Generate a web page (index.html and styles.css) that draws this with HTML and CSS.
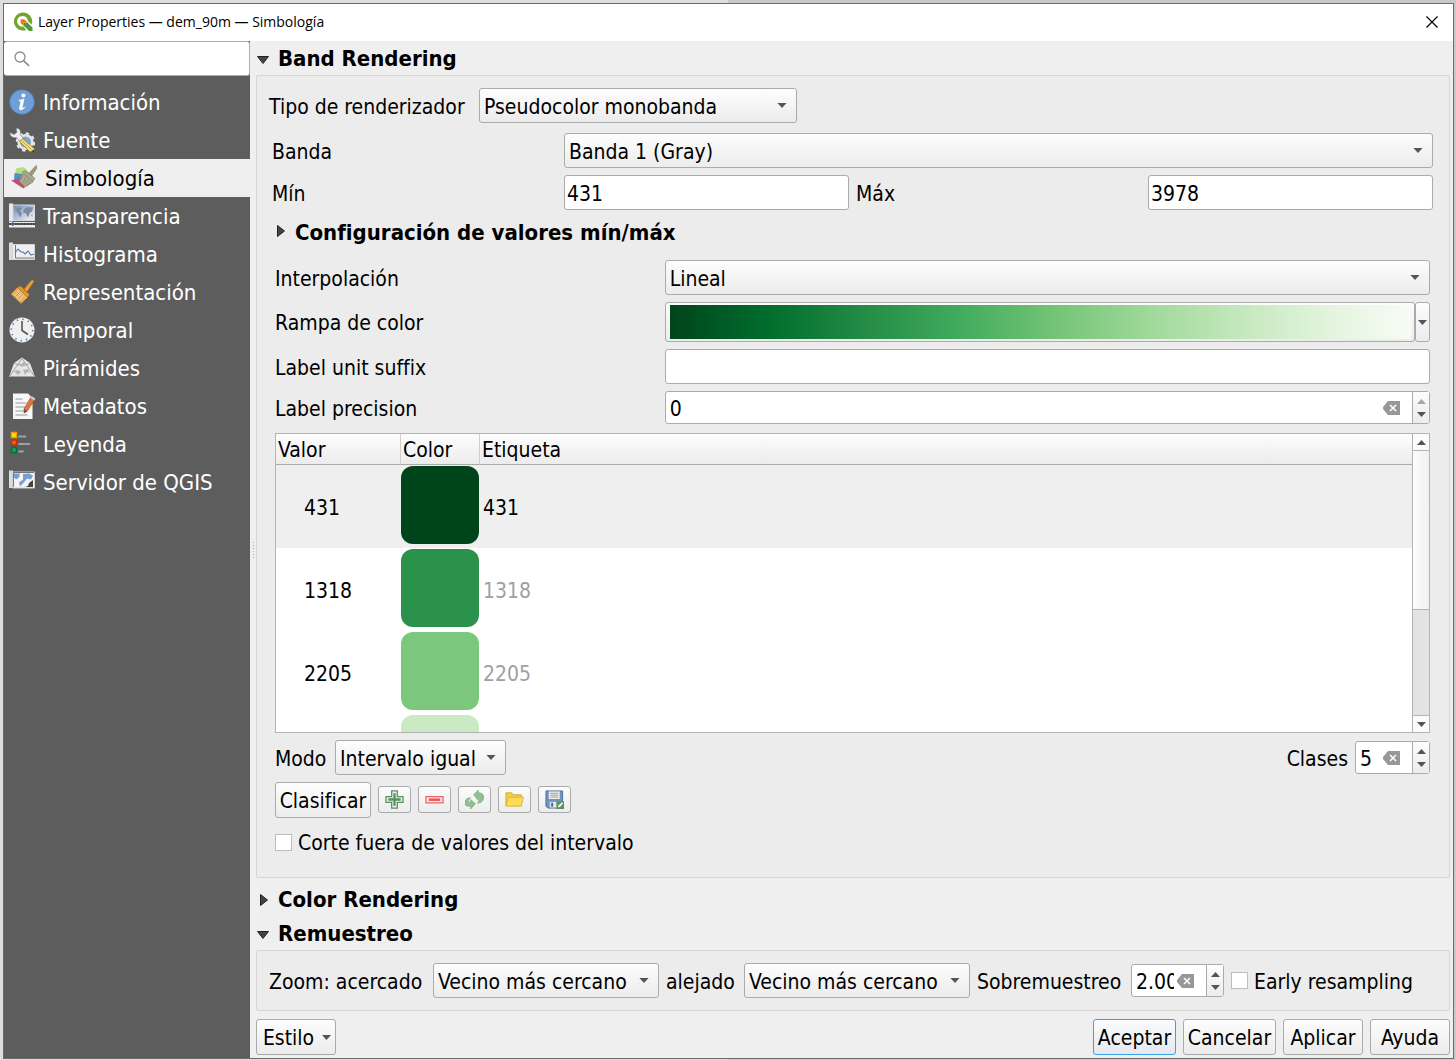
FILE: index.html
```html
<!DOCTYPE html>
<html lang="es">
<head>
<meta charset="utf-8">
<title>Layer Properties — dem_90m — Simbología</title>
<link rel="stylesheet" href="styles.css">
</head>
<body>
<div class="window">
  <header class="titlebar">
    <svg class="logo" viewBox="0 0 20 20" aria-hidden="true">
      <path d="M9.600 .5a9 9 0 1 0 3.600 17.400l-2.600-3.300a5.400 5.400 0 1 1 4.300-5.400l3.800 3.200A9 9 0 0 0 9.600.5z" fill="#6fa72c"/>
      <path d="M10.500 10.500h3.800l5.200 5v3.500h-3.300l-5.700-5.400z" fill="#4f9a36"/>
      <path d="M7.600 7.200h3.600l3.400 3.300h-3.900v3.500L7.600 11z" fill="#ee7913"/>
    </svg>
    <h1 class="title">Layer Properties — dem_90m — Simbología</h1>
    <button class="close" type="button" aria-label="Cerrar"><svg viewBox="0 0 12 12"><path d="M.5.5l11 11M11.500.5l-11 11" stroke="#000" stroke-width="1.200"/></svg></button>
  </header>
  <div class="body">
    <aside class="sidebar">
      <div class="search">
        <svg viewBox="0 0 16 16" aria-hidden="true"><circle cx="6" cy="6" r="5" fill="none" stroke="#8c8c8c" stroke-width="1.300"/><path d="M9.600 9.600l5.400 5.200" stroke="#8c8c8c" stroke-width="1.600"/></svg>
        <input type="text" aria-label="Buscar">
      </div>
      <nav class="pages">
        <a href="#info"><svg viewBox="0 0 26 26"><circle cx="13" cy="13" r="12.500" fill="#5b8fcc"/><circle cx="13" cy="13" r="11.500" fill="#6f9fd6"/><circle cx="14.400" cy="6.400" r="2" fill="#fff"/><path d="M10.200 11.200c2-.4 3.600-.9 4.900-1.300l-2 8.500c-.2 1 .3 1.200 2.300-.4l.4.500c-2.600 3-5.800 3.200-5.300.4l1.500-6.500-1.900-.5z" fill="#fff" stroke="#fff" stroke-width=".6"/></svg>Información</a>
        <a href="#source"><svg viewBox="0 0 26 26"><circle cx="16.500" cy="15" r="6.800" fill="#7ba3d3" stroke="#e6e6e6" stroke-width="2.600"/><circle cx="16.500" cy="15" r="8.700" fill="none" stroke="#e6e6e6" stroke-width="2" stroke-dasharray="3.400 3.430"/><path d="M.8 5.500l4.200 2 3-2.300L7 1.200C10.500.8 12.500 4 11.200 7.500l3.300 4-3.200 3-4-4C4 11.500.8 9 .8 5.500z" fill="#efefef" stroke="#777" stroke-width=".6"/><path d="M10.500 14.500l3.300-3 11.500 10-.8 3.500-4-.5z" fill="#f0dc7a" stroke="#8d7930" stroke-width=".8"/><path d="M12.500 13.500l10 9" stroke="#c0a951"/><path d="M22 24l3-1v2.500z" fill="#333"/></svg>Fuente</a>
        <a class="current" href="#symbology" aria-current="page"><svg viewBox="0 0 26 26"><path d="M5 3.500L13 2l5 6-3 4-11-2z" fill="#b6dc84"/><path d="M3.500 8l8 1 1.500 4.500-10 2z" fill="#4e91c9"/><path d="M0 15.500l10-2.500 4 9-1.500 1.500z" fill="#c04e72"/><path d="M17.500 9l7.500-8.500 1.800 1.200L20 12z" fill="#9a9b78" stroke="#77785c" stroke-width=".6"/><path d="M11.500 7l3-1.500 9.500 8-2 3z" fill="#a8a98b" stroke="#77785c" stroke-width=".6"/><path d="M11.500 8.500l10.500 8.500-8 5-6-6z" fill="#b0aa94" stroke="#7d7863" stroke-width=".7"/><path d="M12 10.500l-2.500 5M14.500 12.500L12 18M17 14.500l-3.500 5M19.500 16.500L15 21" stroke="#7d7863" stroke-width=".6"/></svg>Simbología</a>
        <a href="#transparency"><svg viewBox="0 0 26 26"><defs><linearGradient id="fade" x1="0" y1="0" x2="1" y2="1"><stop offset="0" stop-color="#6288bd"/><stop offset=".8" stop-color="#e3e5e8"/></linearGradient></defs><path d="M0 .5h4v18H0z" fill="#e8e8e8"/><path d="M4 2h21.500v15.500H4z" fill="url(#fade)" stroke="#d5d8dd"/><path d="M6 6l4-2 3 1.500-2 2.500 2 2.500-2 4-2-4zM15 6l4-2 5 .5-1 4-2 1-2 5-2-4-3-1zM22 12l2 .5-1 1.500z" fill="#7c8ca5"/><path d="M0 19h26v5.500H0z" fill="#ececec"/><path d="M0 21h26" stroke="#333" stroke-width="1.800"/><path d="M2 21h24" stroke="#888" stroke-width="1" stroke-dasharray="1 2"/><path d="M3 19h1.500v4H3z" fill="#3f6faf"/></svg>Transparencia</a>
        <a href="#histogram"><svg viewBox="0 0 26 26"><path d="M0 1.500h4v17.500H0z" fill="#dcdcdc"/><path d="M3.500 3.500h22V18.500h-22z" fill="#efefef" stroke="#d2d2d2"/><path d="M6.500 4v13H25" fill="none" stroke="#777"/><path d="M6 12l3-4 3 3 2 0 2 2 3-3 3 4 3-1" fill="none" stroke="#5378ad" stroke-width="1.100"/></svg>Histograma</a>
        <a href="#rendering"><svg viewBox="0 0 26 26"><path d="M15 10l8-9.500 2.200 1.800L18 13z" fill="#e4a23b" stroke="#a8650f" stroke-width=".8"/><path d="M8.500 8.500l3-1.500 9 8.500-2 3z" fill="#e29a30" stroke="#a8650f" stroke-width=".8"/><path d="M8.500 8.500l10 10-6.500 6L2 15z" fill="#edc07c" stroke="#b9741d" stroke-width=".8"/><path d="M8.500 10.500l-4.500 5M11 13l-5 5M13.500 15.500l-5 5M16 18l-5 5" stroke="#c98b3c" stroke-width=".8"/></svg>Representación</a>
        <a href="#temporal"><svg viewBox="0 0 26 26"><circle cx="13" cy="13" r="12.500" fill="#efefef"/><circle cx="13" cy="13" r="10.700" fill="none" stroke="#507bb2" stroke-width="1.600" stroke-dasharray="1.400 4.200"/><path d="M13 4v9.500l6 4" fill="none" stroke="#555" stroke-width="1.600"/></svg>Temporal</a>
        <a href="#pyramids"><svg viewBox="0 0 26 26"><path d="M8 6l5-3.500L18 6l3 2 5 14H0L5 8z" fill="#e6e6e6"/><path d="M13 3.500L.5 21.500h25zM5 8l4 2M21 8l-4 2M8.500 10h9" fill="none" stroke="#929292" stroke-width=".8"/><path d="M5 16l4-1 3 2-3 3zM14 15l5-1 2 4-3-1-2 3zM9 8l3 1 3-2 2 3-4 2z" fill="#b4b4b4"/></svg>Pirámides</a>
        <a href="#metadata"><svg viewBox="0 0 26 26"><path d="M4 .500h15L23.500 5v21H4z" fill="#f7f7f7"/><path d="M6.500 6h7M6.500 10h11M6.500 14h10M6.500 18h8M6.500 22h12" stroke="#989898" stroke-width="1.200"/><path d="M22.500 3l4 2.500-8.500 13-3 1.500 0-4z" fill="#df753b" stroke="#9d4320" stroke-width=".6"/><path d="M22.500 3l4 2.500-1.200 2-4-2.500z" fill="#c6cbd1"/><path d="M15 16l3 2-3 2z" fill="#555"/></svg>Metadatos</a>
        <a href="#legend"><svg viewBox="0 0 26 26"><path d="M2.500 1.500h5v5h-5z" fill="#ffe11b" stroke="#f29f00" stroke-width="1.400"/><path d="M2.500 9h5v5h-5z" fill="#ff5a15" stroke="#c92c00" stroke-width="1.400"/><path d="M2.500 16.500h5v5h-5z" fill="#1ca55b" stroke="#00713a" stroke-width="1.400"/><path d="M10 5.500h6.500M10 13h10.500M10 20.500h4" stroke="#a0a0a0" stroke-width="1.800" stroke-linecap="round"/></svg>Leyenda</a>
        <a href="#server"><svg viewBox="0 0 26 26"><path d="M0 1.500h4v17.500H0z" fill="#dcdcdc"/><path d="M3.500 3h22v16h-22z" fill="#f4f4f4" stroke="#d2d2d2"/><path d="M5 4.500h6l-1 4-3 2-2-2zM14 5l6-.5 4 2-2 4-4-1-4 5-3 3-1-4 4-3z" fill="#74a0d3"/><path d="M24 11v7h-8l3-1 1-3z" fill="#444"/><path d="M4.500 3.500h20.500M4.500 3.500V18" stroke="#444" stroke-width=".7" fill="none"/></svg>Servidor de QGIS</a>
      </nav>
    </aside>
    <div class="splitter" aria-hidden="true"><i></i><i></i><i></i><i></i><i></i><i></i></div>
    <main class="main">
      <h2 class="section"><button type="button" aria-expanded="true">Band Rendering</button></h2>
      <section class="group band">
        <div class="line">
          <label class="renderer-label" for="renderer">Tipo de renderizador</label>
          <select id="renderer" class="renderer"><option>Pseudocolor monobanda</option></select>
        </div>
        <div class="band-grid">
          <label for="banda">Banda</label>
          <select id="banda" class="wide"><option>Banda 1 (Gray)</option></select>
          <label for="min">Mín</label>
          <input id="min" class="field" type="text" value="431">
          <label for="max">Máx</label>
          <input id="max" class="field" type="text" value="3978">
        </div>
        <div class="inner">
          <h3 class="section minmax"><button type="button" aria-expanded="false">Configuración de valores mín/máx</button></h3>
          <div class="form">
            <label for="interp">Interpolación</label>
            <select id="interp"><option>Lineal</option></select>
            <span class="caption">Rampa de color</span>
            <div class="ramp">
              <button class="ramp-preview" type="button" aria-label="Rampa de color"><span></span></button>
              <button class="ramp-menu" type="button" aria-label="Elegir rampa"></button>
            </div>
            <label for="suffix">Label unit suffix</label>
            <input id="suffix" class="field" type="text">
            <label for="precision">Label precision</label>
            <div class="spin">
              <input id="precision" type="text" value="0">
              <button class="clear" type="button" aria-label="Borrar"><svg viewBox="0 0 17 14"><path d="M5 0h12v14H5L0 8V6z" fill="#979797"/><path d="M7 4l6 6M13 4l-6 6" stroke="#fff" stroke-width="1.500"/></svg></button>
              <span class="steps"><button class="up off" type="button" aria-label="Más" disabled></button><button class="down" type="button" aria-label="Menos"></button></span>
            </div>
          </div>
          <div class="list">
            <div class="list-view">
              <table>
                <colgroup><col class="col-value"><col class="col-color"><col></colgroup>
                <thead><tr><th>Valor</th><th>Color</th><th>Etiqueta</th></tr></thead>
                <tbody>
                  <tr class="active"><td>431</td><td><div class="swatch c1"></div></td><td>431</td></tr>
                  <tr><td>1318</td><td><div class="swatch c2"></div></td><td class="auto">1318</td></tr>
                  <tr><td>2205</td><td><div class="swatch c3"></div></td><td class="auto">2205</td></tr>
                  <tr><td></td><td><div class="swatch c4"></div></td><td></td></tr>
                </tbody>
              </table>
            </div>
            <div class="scrollbar">
              <button class="up" type="button" aria-label="Subir"></button>
              <div class="thumb"></div>
              <div class="track"></div>
              <button class="down" type="button" aria-label="Bajar"></button>
            </div>
          </div>
          <div class="line mode">
            <label class="mode-label" for="mode">Modo</label>
            <select id="mode" class="mode-select"><option>Intervalo igual</option></select>
            <label class="push" for="classes">Clases</label>
            <div class="spin classes">
              <input id="classes" type="text" value="5">
              <button class="clear" type="button" aria-label="Borrar"><svg viewBox="0 0 17 14"><path d="M5 0h12v14H5L0 8V6z" fill="#979797"/><path d="M7 4l6 6M13 4l-6 6" stroke="#fff" stroke-width="1.500"/></svg></button>
              <span class="steps"><button class="up" type="button" aria-label="Más"></button><button class="down" type="button" aria-label="Menos"></button></span>
            </div>
          </div>
          <div class="line tools">
            <button class="btn classify" type="button">Clasificar</button>
            <button class="tool" type="button" aria-label="Añadir"><svg viewBox="0 0 20 20"><path d="M7 1h6v6h6v6h-6v6H7v-6H1V7h6z" fill="#e3f0e3" stroke="#5b9060" stroke-width="1.300"/><path d="M10 3.500v13M3.500 10h13" stroke="#5b9060" stroke-width="2.400"/></svg></button>
            <button class="tool" type="button" aria-label="Quitar"><svg viewBox="0 0 20 20"><path d="M1 7h18v6.500H1z" fill="#fde4e4" stroke="#ee6464" stroke-width="1.300"/><path d="M4 10.200h12" stroke="#e85656" stroke-width="2.600"/></svg></button>
            <button class="tool" type="button" aria-label="Invertir"><svg viewBox="0 0 20 20"><path d="M9 5l5-5v3c6 0 8 5 3 10l-4 1c3-4 3-6 1-6v3z" fill="#8fc08f" stroke="#6fa572" stroke-width=".6"/><path d="M11 14.500l-5 5.500v-3c-7 1-8-4-4-8l4-1c-3 3-3 5 0 5v-3z" fill="#8fc08f" stroke="#6fa572" stroke-width=".6"/></svg></button>
            <button class="tool" type="button" aria-label="Abrir"><svg viewBox="0 0 20 20"><path d="M1 16.500V3h6l1.500 2H17v3" fill="#f3cf4d" stroke="#d4a92a"/><path d="M1 17L3.500 7.500h16L17 17z" fill="#fddb5b" stroke="#dcb233"/></svg></button>
            <button class="tool" type="button" aria-label="Guardar"><svg viewBox="0 0 20 20"><path d="M1 1h17.500v18H3l-2-2z" fill="#6f95c2" stroke="#4b6f9c"/><path d="M4 1.500h11.500v8H4z" fill="#ececec"/><path d="M5.500 3.500h8.500M5.500 5.500h8.500M5.500 7.500h8.500" stroke="#999" stroke-width=".9"/><path d="M5 12.500h8v6H5z" fill="#e6e6e6"/><path d="M6.500 13.500h2v4h-2z" fill="#41638d"/><path d="M12 12h8v8h-8z" fill="#5b9060"/><path d="M13.500 18.500l1-2.500 3.500-3 1 1-3 3.500z" fill="#fff"/></svg></button>
          </div>
          <label class="check clip"><input type="checkbox">Corte fuera de valores del intervalo</label>
        </div>
      </section>
      <h2 class="section color"><button type="button" aria-expanded="false">Color Rendering</button></h2>
      <h2 class="section"><button type="button" aria-expanded="true">Remuestreo</button></h2>
      <section class="group">
        <div class="line">
          <label class="zin-label" for="zin">Zoom: acercado</label>
          <select id="zin" class="resample"><option>Vecino más cercano</option></select>
          <label class="zout-label" for="zout">alejado</label>
          <select id="zout" class="resample"><option>Vecino más cercano</option></select>
          <label class="over-label" for="over">Sobremuestreo</label>
          <div class="spin over">
            <input id="over" type="text" value="2.00">
            <button class="clear" type="button" aria-label="Borrar"><svg viewBox="0 0 17 14"><path d="M5 0h12v14H5L0 8V6z" fill="#979797"/><path d="M7 4l6 6M13 4l-6 6" stroke="#fff" stroke-width="1.500"/></svg></button>
            <span class="steps"><button class="up" type="button" aria-label="Más"></button><button class="down" type="button" aria-label="Menos"></button></span>
          </div>
          <label class="check"><input type="checkbox">Early resampling</label>
        </div>
      </section>
      <footer class="footer">
        <button class="btn style" type="button">Estilo</button>
        <button class="btn default" type="button">Aceptar</button>
        <button class="btn cancel" type="button">Cancelar</button>
        <button class="btn apply" type="button">Aplicar</button>
        <button class="btn help" type="button">Ayuda</button>
      </footer>
    </main>
  </div>
</div>
</body>
</html>
```
FILE: styles.css
```css
:root {
  --line: #ababab;
  --face: linear-gradient(#fdfdfd, #ececec);
  --arrow-down: url("data:image/svg+xml,%3Csvg xmlns='http://www.w3.org/2000/svg' viewBox='0 0 11 6' width='11' height='6'%3E%3Cpath d='M0 0h11L5.5 6z' fill='%23555'/%3E%3C/svg%3E");
  --arrow-up: url("data:image/svg+xml,%3Csvg xmlns='http://www.w3.org/2000/svg' viewBox='0 0 11 6' width='11' height='6'%3E%3Cpath d='M0 6h11L5.5 0z' fill='%23555'/%3E%3C/svg%3E");
  --fold-open: url("data:image/svg+xml,%3Csvg xmlns='http://www.w3.org/2000/svg' width='12' height='8'%3E%3Cpath d='M.5.5h11L6 7.5z' fill='%23444' stroke='%23222'/%3E%3C/svg%3E");
  --fold-shut: url("data:image/svg+xml,%3Csvg xmlns='http://www.w3.org/2000/svg' width='8' height='12'%3E%3Cpath d='M.5.5v11L7.5 6z' fill='%23444' stroke='%23222'/%3E%3C/svg%3E");
}

* { box-sizing: border-box; }

body {
  margin: 0;
  padding: 3px 2px 1px 3px;
  min-height: 100vh;
  display: flex;
  background: linear-gradient(90deg, #dedede 50%, #c9c9c9 50%);
  color: #000;
  font: 21px/26px "DejaVu Sans Condensed", "DejaVu Sans", sans-serif;
  font-stretch: condensed;
}

button, input, select { font: inherit; color: inherit; margin: 0; }
button { padding: 0; border: 0; background: none; }
svg { display: block; }
label, .caption { padding-top: 2px; }

.window {
  flex: 1;
  min-width: 0;
  display: flex;
  flex-direction: column;
  border: 1px solid #6b6b6b;
  background: #efefef;
}

.titlebar {
  display: flex;
  align-items: center;
  height: 37px;
  padding: 0 15px 2px 9px;
  background: #fff;
}
.logo { width: 20px; height: 20px; margin-right: 5px; }
.title { flex: 1; margin: 0; font: 14px/20px "Open Sans", sans-serif; }
.close svg { width: 12px; height: 12px; }

.body { flex: 1; display: flex; }

.sidebar { width: 246px; background: #5d5d5d; }
.search {
  display: flex;
  align-items: center;
  gap: 8px;
  height: 35px;
  padding-left: 10px;
  background: #fff;
  border: 1px solid var(--line);
  border-left: 0;
  border-radius: 3px;
}
.search svg { width: 16px; height: 16px; }
.search input { flex: 1; min-width: 0; border: 0; outline: 0; background: none; }

.pages { padding-top: 7px; font-size: 22px; }
.pages a {
  display: flex;
  align-items: center;
  gap: 8px;
  height: 38px;
  padding: 2px 0 0 5px;
  color: #fff;
  text-decoration: none;
}
.pages svg { width: 26px; height: 26px; margin-bottom: 2px; }
.pages a.current { padding-left: 7px; background: #efefef; color: #000; }

.splitter {
  width: 6px;
  display: flex;
  flex-direction: column;
  align-items: center;
  justify-content: center;
  gap: 2px;
}
.splitter i { width: 1px; height: 1px; background: #aaa; }

.main { flex: 1; min-width: 0; padding: 0 3px 3px 0; }

.section { margin: 0; font-size: 22px; line-height: 34px; font-weight: bold; }
.section button {
  display: block;
  height: 34px;
  padding: 2px 0 0 22px;
  line-height: 32px;
  background: var(--fold-open) 1px 15px no-repeat;
}
.section button[aria-expanded="false"] { background: var(--fold-shut) 4px 12px no-repeat; }
.section.color { margin-top: 4px; }
.section.minmax { margin: 5px 0 11px; }
.section.minmax button { padding-left: 20px; background-position: 2px 10px; }

.group {
  padding: 12px;
  background: #ececec;
  border: 1px solid #d6d6d6;
  border-radius: 2px;
}
.band { padding-bottom: 22px; }

.line { display: flex; align-items: center; gap: 7px; }

select {
  appearance: none;
  min-width: 0;
  height: 35px;
  padding: 2px 24px 0 4px;
  border: 1px solid var(--line);
  border-radius: 3px;
  background: var(--arrow-down) right 9px center / 10px 5px no-repeat, var(--face);
}
.renderer { width: 318px; }
.renderer-label { min-width: 203px; }
.mode-label { min-width: 53px; }
.zin-label { min-width: 157px; }
.zout-label { min-width: 71px; }
.over-label { min-width: 147px; }
.mode-select { width: 171px; }
.resample { width: 226px; }

.field {
  min-width: 0;
  height: 35px;
  padding: 2px 2px 0;
  border: 1px solid var(--line);
  border-radius: 3px;
  background: #fff;
}

.band-grid {
  display: grid;
  grid-template-columns: repeat(4, minmax(0, 1fr));
  gap: 7px;
  align-items: center;
  margin: 10px 4px 0 3px;
}
.wide { grid-column: 2 / 5; }

.inner { margin: 0 7px 0 6px; }
.form {
  display: grid;
  grid-template-columns: minmax(0, 1fr) minmax(0, 2fr);
  gap: 7px;
  align-items: center;
}

.ramp { display: flex; height: 40px; }
.ramp-preview, .ramp-menu { border: 1px solid var(--line); border-radius: 3px; background: var(--face); }
.ramp-preview { flex: 1; padding: 2px 3px 2px 4px; }
.ramp-preview span {
  display: block;
  height: 34px;
  background: linear-gradient(90deg, #00441b 0%, #006d2c 13%, #238b45 26%, #41ab5d 39%, #74c476 52%, #a1d99b 65%, #c7e9c0 78%, #e5f5e0 90%, #f7fcf5 100%);
}
.ramp-menu { width: 15px; background: var(--arrow-down) center / 9px 5px no-repeat, var(--face); }

.spin {
  display: flex;
  align-items: center;
  height: 33px;
  background: #fff;
  border: 1px solid var(--line);
  border-radius: 3px;
}
.spin input { flex: 1; width: 0; min-width: 0; padding: 2px 0 0 4px; border: 0; outline: 0; background: none; }
.clear { margin: 0 12px 0 3px; }
.clear svg { width: 17px; height: 14px; }
.steps {
  display: flex;
  flex-direction: column;
  align-self: stretch;
  width: 17px;
  border-left: 1px solid var(--line);
  background: var(--face);
}
.steps button { flex: 1; }
.up { background: var(--arrow-up) center / 9px 5px no-repeat; }
.down { background: var(--arrow-down) center / 9px 5px no-repeat; }
.steps .up { background-position: center bottom 4px; }
.steps .down { background-position: center top 4px; }
.off { opacity: .5; }
.classes { width: 75px; }
.over { width: 93px; }

.list {
  display: flex;
  height: 300px;
  margin-top: 9px;
  border: 1px solid #b4b4b4;
  background: #fff;
}
.list-view { flex: 1; overflow: hidden; }
table { width: 100%; border-collapse: separate; border-spacing: 0; table-layout: fixed; }
.col-value { width: 125px; }
.col-color { width: 79px; }
th {
  height: 31px;
  padding: 2px 2px 0;
  text-align: left;
  font-weight: normal;
  background: var(--face);
  border-right: 1px solid #cfcfcf;
  border-bottom: 1px solid var(--line);
}
th:last-child { border-right: 0; }
td { height: 83px; padding: 2px 3px 0; }
td:first-child { padding-left: 28px; }
td:nth-child(2) { padding: 0; }
.active { background: #efefef; }
.auto { color: #a0a0a0; }
.swatch { width: 78px; height: 78px; margin-bottom: 3px; border-radius: 12px; }
.c1 { background: #00441b; }
.c2 { background: #2b924b; }
.c3 { background: #7bc87c; }
.c4 { background: #c9eac3; }

.scrollbar {
  width: 17px;
  display: flex;
  flex-direction: column;
  border-left: 1px solid #b4b4b4;
}
.scrollbar button { height: 16px; background-color: #fbfbfb; }
.thumb { height: 160px; border: solid #b4b4b4; border-width: 1px 0; background: linear-gradient(90deg, #fdfdfd, #f0f0f0); }
.track { flex: 1; border-bottom: 1px solid #b4b4b4; background: #e3e3e3; }

.mode, .tools { margin-top: 7px; }
.push { margin-left: auto; }

.btn {
  height: 36px;
  padding-top: 2px;
  border: 1px solid var(--line);
  border-radius: 3px;
  background: var(--face);
  text-align: center;
}
.classify { width: 96px; }
.tool {
  width: 33px;
  height: 27px;
  margin-bottom: 2px;
  display: grid;
  place-items: center;
  border: 1px solid var(--line);
  border-radius: 3px;
  background: var(--face);
}
.tool svg { width: 19px; height: 19px; }

.check { display: flex; align-items: center; gap: 6px; }
.check input {
  appearance: none;
  width: 17px;
  height: 17px;
  margin-bottom: 2px;
  border: 1px solid #bdbdbd;
  background: #fff;
}
.clip { margin: 10px 0 -1px; }

.footer { display: flex; gap: 7px; margin-top: 8px; }
.style {
  width: 80px;
  margin-right: auto;
  padding: 2px 20px 0 5px;
  background: var(--arrow-down) right 4px center / 9px 5px no-repeat, var(--face);
}
.default { width: 83px; border-color: #3d9fe8; background: linear-gradient(#fbfcfe, #e3e9f0); }
.cancel { width: 93px; }
.apply, .help { width: 80px; }
```
